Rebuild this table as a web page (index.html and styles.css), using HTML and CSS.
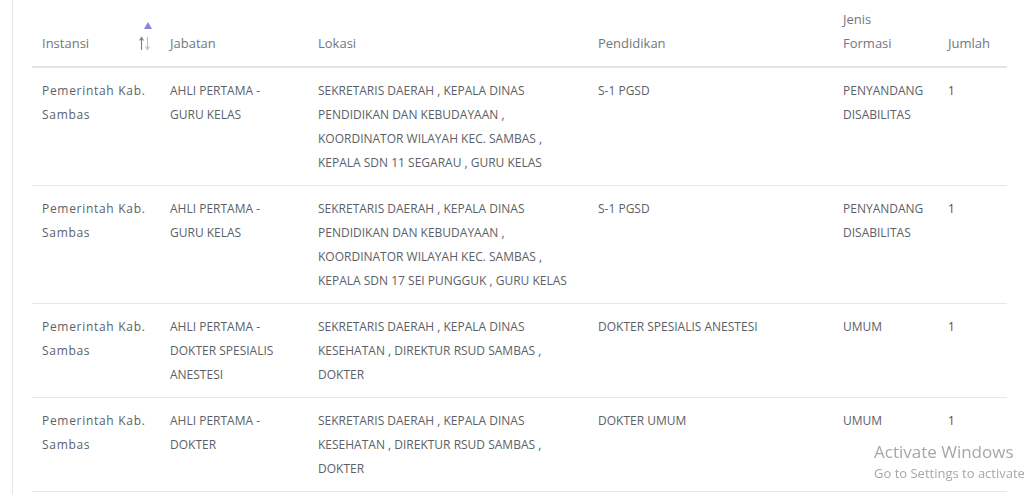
FILE: index.html
```html
<!DOCTYPE html>
<html lang="id">
<head>
<meta charset="utf-8">
<title>Formasi</title>
<link rel="stylesheet" href="styles.css">
</head>
<body>
<div class="card">
  <table class="formasi">
    <colgroup>
      <col class="c-instansi">
      <col class="c-jabatan">
      <col class="c-lokasi">
      <col class="c-pendidikan">
      <col class="c-jenis">
      <col class="c-jumlah">
    </colgroup>
    <thead>
      <tr>
        <th class="sortable">Instansi
          <span class="sort">
            <svg width="16" height="30" viewBox="0 0 16 30">
              <path d="M6 8 L10 1 L14 8 Z" fill="#8585e0"/>
              <path d="M3.5 29 V17 M1.5 19.5 L3.5 16.5 L5.5 19.5" stroke="#8a7a6a" stroke-width="1.1" fill="none"/>
              <path d="M9.5 16 V28 M7.5 25.5 L9.5 28.5 L11.5 25.5" stroke="#b8bcc4" stroke-width="1.1" fill="none"/>
            </svg>
          </span>
        </th>
        <th>Jabatan</th>
        <th>Lokasi</th>
        <th>Pendidikan</th>
        <th>Jenis<br>Formasi</th>
        <th>Jumlah</th>
      </tr>
    </thead>
    <tbody>
      <tr>
        <td class="instansi">Pemerintah Kab. Sambas</td>
        <td>AHLI PERTAMA - GURU KELAS</td>
        <td>SEKRETARIS DAERAH , KEPALA DINAS PENDIDIKAN DAN KEBUDAYAAN , KOORDINATOR WILAYAH KEC. SAMBAS , KEPALA SDN 11 SEGARAU , GURU KELAS</td>
        <td>S-1 PGSD</td>
        <td>PENYANDANG DISABILITAS</td>
        <td class="num">1</td>
      </tr>
      <tr>
        <td class="instansi">Pemerintah Kab. Sambas</td>
        <td>AHLI PERTAMA - GURU KELAS</td>
        <td>SEKRETARIS DAERAH , KEPALA DINAS PENDIDIKAN DAN KEBUDAYAAN , KOORDINATOR WILAYAH KEC. SAMBAS , KEPALA SDN 17 SEI PUNGGUK , GURU KELAS</td>
        <td>S-1 PGSD</td>
        <td>PENYANDANG DISABILITAS</td>
        <td class="num">1</td>
      </tr>
      <tr>
        <td class="instansi">Pemerintah Kab. Sambas</td>
        <td>AHLI PERTAMA - DOKTER SPESIALIS ANESTESI</td>
        <td>SEKRETARIS DAERAH , KEPALA DINAS KESEHATAN , DIREKTUR RSUD SAMBAS , DOKTER</td>
        <td>DOKTER SPESIALIS ANESTESI</td>
        <td>UMUM</td>
        <td class="num">1</td>
      </tr>
      <tr>
        <td class="instansi">Pemerintah Kab. Sambas</td>
        <td>AHLI PERTAMA - DOKTER</td>
        <td>SEKRETARIS DAERAH , KEPALA DINAS KESEHATAN , DIREKTUR RSUD SAMBAS , DOKTER</td>
        <td>DOKTER UMUM</td>
        <td>UMUM</td>
        <td class="num">1</td>
      </tr>
    </tbody>
  </table>
</div>
<div class="watermark">
  <div class="wm-title">Activate Windows</div>
  <div class="wm-sub">Go to Settings to activate Windows.</div>
</div>
</body>
</html>
```
FILE: styles.css
```css
html, body {
  margin: 0;
  padding: 0;
  background: #ffffff;
  overflow: hidden;
}

body {
  font-family: "Open Sans", "Noto Sans", sans-serif;
  color: #5f6368;
  height: 494px;
}

.card {
  margin-left: 12px;
  border-left: 1px solid #e6e6e6;
  padding-left: 19px;
  height: 494px;
}

.formasi {
  table-layout: fixed;
  border-collapse: collapse;
  width: 975px;
}

.c-instansi { width: 128px; }
.c-jabatan { width: 148px; }
.c-lokasi { width: 280px; }
.c-pendidikan { width: 245px; }
.c-jenis { width: 105px; }
.c-jumlah { width: 69px; }

.formasi th {
  font-weight: 400;
  font-size: 13px;
  line-height: 24px;
  color: #72767d;
  text-align: left;
  vertical-align: bottom;
  padding: 7px 10px 11px;
  border-bottom: 2px solid #e1e3e7;
}

.formasi th.sortable {
  position: relative;
}

.sort {
  position: absolute;
  right: 6px;
  top: 21px;
  line-height: 0;
}

.formasi td {
  font-size: 12px;
  line-height: 24px;
  color: #5c5f66;
  vertical-align: top;
  padding: 11px 16px 10px 10px;
  border-bottom: 1px solid #e7e8eb;
}

.formasi td.instansi {
  letter-spacing: 0.7px;
  padding-right: 4px;
}

.formasi td.num {
  color: #9a2a45;
}

.watermark {
  position: fixed;
  left: 874px;
  top: 441px;
  font-family: "Open Sans", "Noto Sans", sans-serif;
  color: #a7a7a7;
  white-space: nowrap;
}

.wm-title {
  font-size: 17px;
  line-height: 22px;
}

.wm-sub {
  font-size: 13px;
  line-height: 20px;
}
```
